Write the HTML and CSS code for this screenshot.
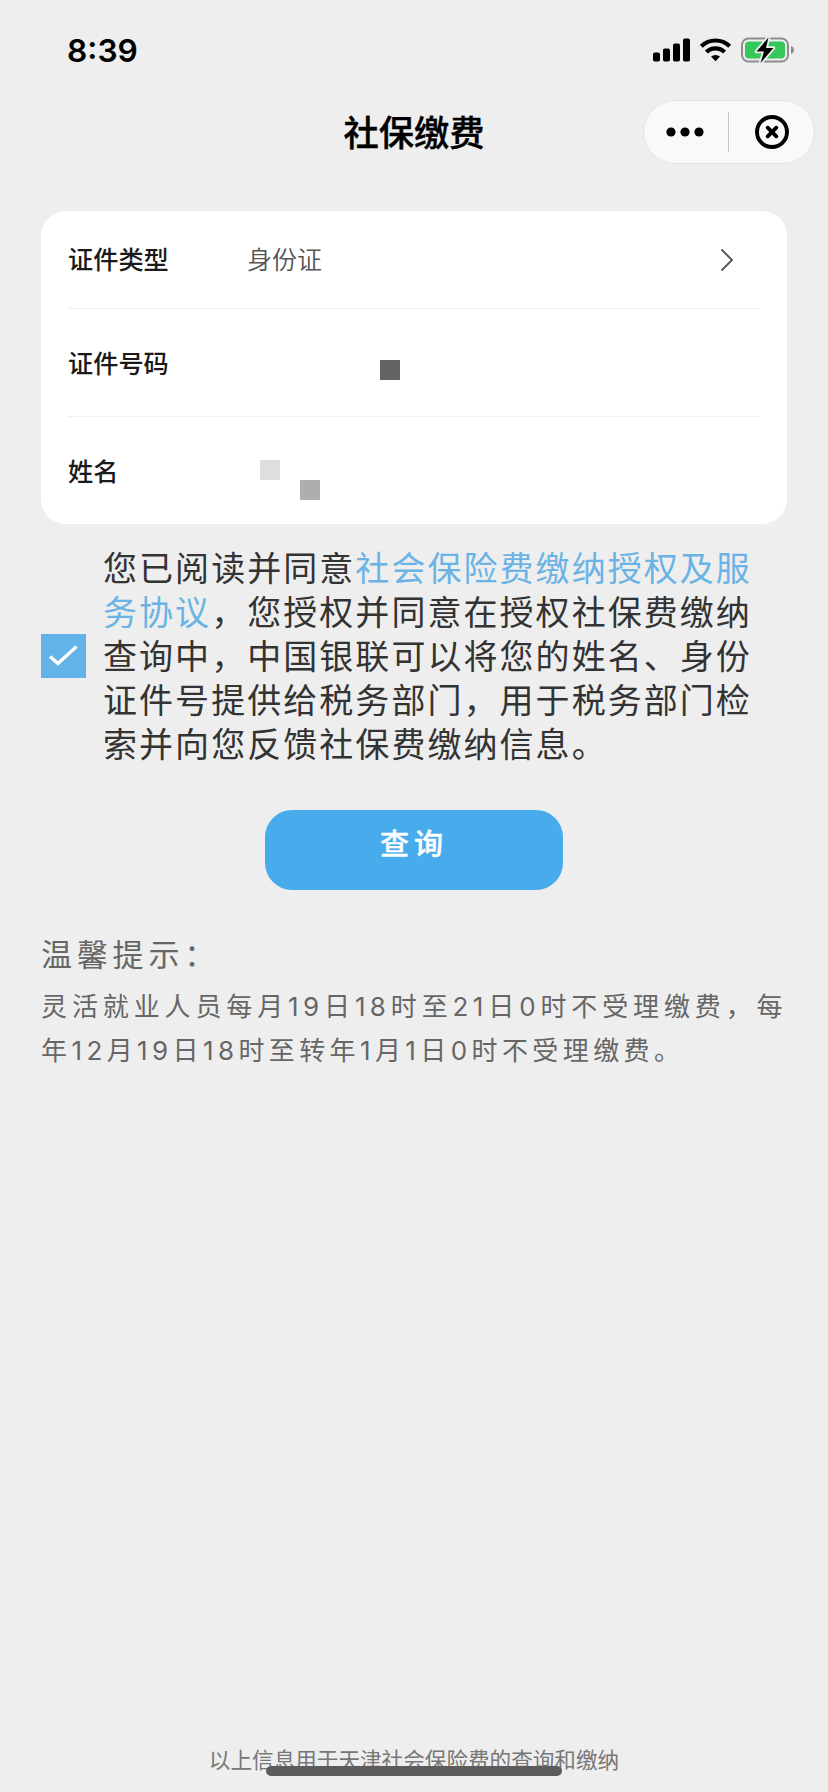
FILE: index.html
```
<!DOCTYPE html>
<html lang="zh-CN">
<head>
<meta charset="utf-8">
<title>社保缴费</title>
<link rel="stylesheet" href="styles.css">
</head>
<body>
<div class="screen">
  <header class="status">
    <span class="time">8:39</span>
    <svg class="status-icons" width="142" height="28" viewBox="0 0 142 28">
      <g fill="#000">
        <rect x="0" y="15.5" width="7" height="9" rx="1.8"/>
        <rect x="10" y="11.5" width="7" height="13" rx="1.8"/>
        <rect x="20" y="6.5" width="7" height="18" rx="1.8"/>
        <rect x="30" y="1.5" width="7" height="23" rx="1.8"/>
      </g>
      <g fill="none" stroke="#000" stroke-width="4.2">
        <path d="M48.3 9.2a20.5 20.5 0 0 1 28.4 0"/>
        <path d="M53.4 15a13 13 0 0 1 18.200 0"/>
      </g>
      <path d="M58 19.600a7 7 0 0 1 9 0l-4.500 4.700z" fill="#000"/>
      <rect x="89" y="1.500" width="46" height="23" rx="6.500" fill="none" stroke="#8e8e90" stroke-width="2"/>
      <rect x="92" y="4.500" width="40" height="17" rx="4" fill="#34c759"/>
      <path d="M138 9c4 1.200 4 6.800 0 8z" fill="#8e8e90"/>
      <path d="M115.500.500L103.500 14.500h7.500l-3.500 11.500L120.500 11h-7.500z" fill="#000" stroke="#eee" stroke-width="3.600" paint-order="stroke" stroke-linejoin="round"/>
    </svg>
  </header>

  <nav class="navbar">
    <h1 class="title">社保缴费</h1>
    <div class="capsule">
      <svg class="dots" width="38" height="10" viewBox="0 0 38 10"><circle cx="5" cy="5" r="4.600"/><circle cx="19" cy="5" r="4.600"/><circle cx="33" cy="5" r="4.600"/></svg>
      <span class="capsule-line"></span>
      <svg class="close" width="34" height="34" viewBox="0 0 34 34" fill="none" stroke="#000"><circle cx="17" cy="17" r="15" stroke-width="3.900"/><path d="M12.700 12.700l8.600 8.600M21.300 12.700l-8.600 8.600" stroke-width="3.900" stroke-linecap="round"/></svg>
    </div>
  </nav>

  <section class="card">
    <div class="row row-first">
      <span class="label">证件类型</span>
      <span class="value">身份证</span>
      <svg class="chevron" width="14" height="24" viewBox="0 0 14 24"><path d="M1.500 1.500L12 12 1.500 22.500" fill="none" stroke="#555" stroke-width="1.900"/></svg>
    </div>
    <div class="row">
      <span class="label">证件号码</span>
      <svg class="mask" width="160" height="60" viewBox="0 0 160 60"><rect x="133" y="27" width="20" height="20" fill="#636363"/></svg>
    </div>
    <div class="row">
      <span class="label">姓名</span>
      <svg class="mask" width="160" height="60" viewBox="0 0 160 60"><rect x="13" y="19" width="20" height="20" fill="#dedede"/><rect x="53" y="39" width="20" height="20" fill="#aeaeae"/></svg>
    </div>
  </section>

  <section class="consent">
    <svg class="checkbox" width="45" height="44" viewBox="0 0 45 44"><rect width="45" height="44" fill="#63b3e9"/><path d="M9 22.500l8 7L35.500 12.500" fill="none" stroke="#fff" stroke-width="3.400"/></svg>
    <p class="agreement">您已阅读并同意<a class="link">社会保险费缴纳授权及服<br>务协议</a>，您授权并同意在授权社保费缴纳<br>查询中，中国银联可以将您的姓名、身份<br>证件号提供给税务部门，用于税务部门检<br>索并向您反馈社保费缴纳信息。</p>
  </section>

  <button class="query">查询</button>

  <section class="tips">
    <h2 class="tips-title">温馨提示：</h2>
    <p class="tips-text">灵活就业人员每月19日18时至21日0时不受理缴费，每年12月19日18时至转年1月1日0时不受理缴费。</p>
  </section>

  <footer class="footer">
    <span>以上信息用于天津社会保险费的查询和缴纳</span>
    <i class="home-bar"></i>
  </footer>
</div>
</body>
</html>
```
FILE: styles.css
```
* { box-sizing: border-box; margin: 0; padding: 0; }
body { background: #eee; font-family: "Noto Sans CJK SC", sans-serif; color: #333; }
.screen { width: 828px; height: 1792px; display: flex; flex-direction: column; overflow: hidden; }
.status { height: 98px; flex: none; display: flex; justify-content: space-between; padding: 36.500px 33px 0 67px; }
.time { font: 600 31.700px/28px Inter, sans-serif; color: #000; }
.status-icons { display: block; }
.navbar { height: 113px; flex: none; display: grid; grid-template-columns: 1fr auto 1fr; padding: 2px 13px 0; align-items: start; }
.title { grid-column: 2; font-size: 35.300px; line-height: 62px; font-weight: 500; -webkit-text-stroke: .4px #000; color: #000; }
.capsule { justify-self: end; width: 172px; height: 64px; border: 1px solid #e3e3e3; border-radius: 32px; background: #f9f9f9; display: flex; align-items: center; padding-left: 22px; }
.dots { margin-right: 24px; }
.capsule-line { width: 1px; height: 40px; background: #c4c4c4; }
.close { margin-left: 26px; }
.card { margin: 0 41px; height: 313px; flex: none; background: #fff; border-radius: 25px; padding: 0 27px; }
.row { height: 108px; display: flex; align-items: center; }
.row + .row { border-top: 1px solid #f0f0f0; }
.label { width: 179px; font-size: 25.200px; font-weight: 500; color: #1a1a1a; padding-bottom: 1px; }
.row-first { height: 97px; }
.row-first .label { padding-bottom: 3px; }
.value { flex: 1; font-size: 25px; color: #555; font-weight: 350; padding-bottom: 3px; }
.chevron { margin-right: 26px; }
.consent { margin: 21px 0 0 41px; display: flex; align-items: center; flex: none; }
.agreement { margin-left: 17px; font-size: 34px; letter-spacing: 2.050px; line-height: 44px; white-space: nowrap; }
.checkbox { margin-top: 2px; }
.link { color: #6bb3e4; }
.query { width: 298px; height: 80px; flex: none; margin: 45px auto 0; border: 0; border-radius: 27px; background: #48acec; color: #fff; font: 500 29px/40px "Noto Sans CJK SC", sans-serif; -webkit-text-stroke: .4px #fff; letter-spacing: 5px; padding: 0 0 16px; }
.tips { margin: 40px 41px 0; color: #666; flex: none; }
.tips-title { font-size: 31px; font-weight: 400; line-height: 46px; letter-spacing: 4.800px; }
.tips-text { font-family: Inter, "Noto Sans CJK SC", sans-serif; font-size: 26px; letter-spacing: 4.400px; line-height: 44px; margin-top: 9px; text-align: justify; }
.footer { margin-top: auto; height: 49px; position: relative; text-align: center; font-size: 21.600px; line-height: 32px; color: #777; }
.home-bar { position: absolute; left: 266px; top: 23px; width: 296px; height: 10px; border-radius: 5px; background: #5c5c5c; }
```
